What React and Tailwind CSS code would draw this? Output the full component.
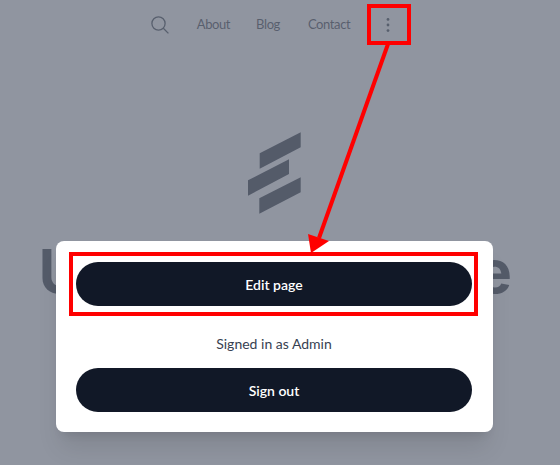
import React from 'react';

const Nav = () => (
    <nav className="flex h-[50px] items-center justify-center pr-[19px] text-[13px] tracking-[-0.4px] text-[#1f2937]">
        <svg width="18" height="18" viewBox="0 0 18 18" fill="none" stroke="currentColor" strokeWidth="1.3" className="mr-[28px]">
            <circle cx="7.5" cy="7.5" r="6.6" />
            <path d="M12.3 12.3 L17.4 17.4" />
        </svg>
        <a className="mr-[26px]">About</a>
        <a className="mr-[28px]">Blog</a>
        <a className="mr-[36px]">Contact</a>
        <svg width="4" height="16" viewBox="0 0 4 16" fill="currentColor">
            <circle cx="2" cy="2.4" r="1.4" />
            <circle cx="2" cy="8" r="1.4" />
            <circle cx="2" cy="13.6" r="1.4" />
        </svg>
    </nav>
);

const Logo = () => (
    <svg width="53" height="82" viewBox="248 132 53 82" fill="#111827">
        <polygon points="259.7,153.3 300.7,132.3 300.7,147.3 259.7,168.7" />
        <polygon points="248,180.3 289,159.3 289,174 248,195.7" />
        <polygon points="259.3,198.3 300.7,177.3 300.7,192.3 259.3,213.7" />
    </svg>
);

const Button = ({ children }) => (
    <button className="h-[44px] w-full rounded-full bg-[#111827] text-[14px] font-semibold text-white">
        {children}
    </button>
);

export default function App() {
    return (
        <div className="relative h-[465px] w-[560px] overflow-hidden bg-white font-['Lato',sans-serif]">
            <Nav />
            <div className="flex flex-col items-center pt-[82px] pr-[11px]">
                <Logo />
                <h1 className="mt-[27px] font-['Inter',sans-serif] text-[60px] leading-[60px] font-bold tracking-[-1.5px] whitespace-nowrap text-[#111827]">
                    Update this page
                </h1>
            </div>

            {/* dimmed overlay */}
            <div className="absolute inset-0 bg-[#6b7280]/75" />

            {/* dialog */}
            <div className="absolute top-[241px] left-[56px] flex w-[437px] flex-col rounded-lg bg-white pt-[21px] pr-[21px] pb-[20px] pl-[20px] shadow-xl">
                <Button>Edit page</Button>
                <p className="mt-[25px] mb-[12px] h-[25px] text-center text-[14px] leading-[25px] text-[#374151]">Signed in as Admin</p>
                <Button>Sign out</Button>
            </div>

            {/* red annotations */}
            <div className="absolute top-[4px] left-[367px] h-[41px] w-[44px] border-4 border-[#ff0000]" />
            <div className="absolute top-[252px] left-[69px] h-[64px] w-[409px] border-4 border-[#ff0000]" />
            <svg className="absolute inset-0" width="560" height="465" viewBox="0 0 560 465" fill="#ff0000">
                <path d="M388 44 L319 238" stroke="#ff0000" strokeWidth="4" fill="none" />
                <polygon points="308,234 329,241 311,253" />
            </svg>
        </div>
    );
}
